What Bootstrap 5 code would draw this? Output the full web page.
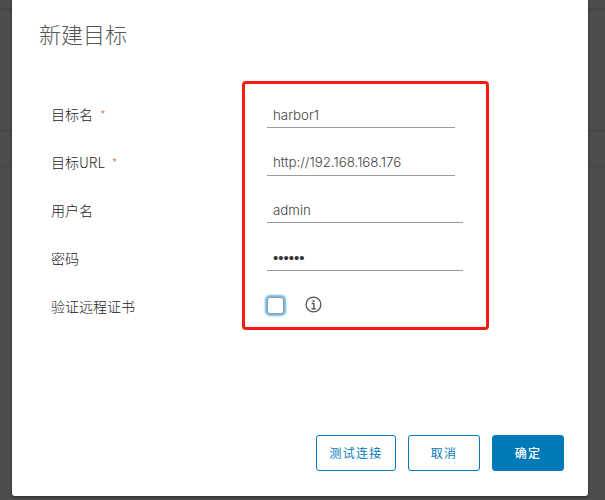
<!DOCTYPE html>
<html lang="zh"><head><meta charset="utf-8">
<link href="https://cdn.jsdelivr.net/npm/bootstrap@5.3.0/dist/css/bootstrap.min.css" rel="stylesheet">
<style>
html,body{height:500px;overflow:hidden}
body{background-color:#4d4d4d;background-image:linear-gradient(#464646,#464646),linear-gradient(#464646,#464646),linear-gradient(#464646,#464646);background-repeat:no-repeat;background-size:100% 2px,100% 2px,100% 1px;background-position:0 8px,0 130px,0 166px;font-family:"Inter","Noto Sans CJK SC",sans-serif;color:#333}
.dlg-wrap{padding:0 17px 0 12px;margin-top:-8px;height:504px}
.dlg{height:504px;background:#fff;border-radius:3px;box-shadow:0 1px 3px rgba(0,0,0,.5);padding:26px 0 0 27px;display:flex;flex-direction:column}
.dlg-title{font-size:22px;font-weight:300;color:#565656;margin:0 0 0;line-height:30px;font-family:"Noto Sans CJK SC",sans-serif}
.form-zone{display:flex;margin-top:33px}
.labels{width:203px;padding-left:12px;padding-top:9px}
.lab{height:48px;font-size:14px;line-height:48px;color:#1a1a1a;font-family:"Noto Sans CJK SC",sans-serif;font-weight:300}
.req{color:#e1705f;margin-left:7px;font-size:13px}
.fields{width:247px;height:249px;border:3px solid #fa1a0e;border-radius:4px;padding:8px 0 0 22px}
.fld{height:47.67px}
.fld input{display:block;border:0;border-bottom:1px solid #9a9a9a;border-radius:0;padding:10px 6px 0;height:36px;font-size:13.3px;font-weight:300;color:#444;font-family:"Inter",sans-serif;background:transparent;outline:0}
.fld input[type=password]{font-family:"Liberation Sans",sans-serif;font-size:15px;color:#333}
.w1{width:188px}
.w2{width:196px}
.chk-row{display:flex;align-items:center;gap:21px;height:48px;margin-top:-2px}
.chkbox{width:17px;height:17px;border:1px solid #9a9a9a;border-radius:3px;box-shadow:0 0 2px 2px #6bb8e6;background:#fff;margin-top:1px}
.acts{margin-top:auto;margin-bottom:25px;padding-right:24px;display:flex;justify-content:flex-end;gap:12px}
.bt{height:36px;font-size:12px;padding:0;border-radius:3px;font-family:"Noto Sans CJK SC",sans-serif;letter-spacing:1.2px;display:flex;align-items:center;justify-content:center}
.bt-o{background:#fff;border:1px solid #0079b8;color:#0079b8}
.bt-p{background:#0079b8;border:1px solid #0079b8;color:#fff;font-weight:500}
.bw1{width:80px}
.bw2{width:72px}
</style></head><body>
<div class="dlg-wrap"><div class="dlg">
<h3 class="dlg-title">新建目标</h3>
<div class="form-zone">
<div class="labels">
<div class="lab">目标名<span class="req">*</span></div>
<div class="lab">目标URL<span class="req">*</span></div>
<div class="lab">用户名</div>
<div class="lab">密码</div>
<div class="lab">验证远程证书</div>
</div>
<div class="fields">
<div class="fld"><input class="w1" value="harbor1"></div>
<div class="fld"><input class="w1" value="http://192.168.168.176"></div>
<div class="fld"><input class="w2" value="admin"></div>
<div class="fld"><input class="w2" type="password" value="harbor"></div>
<div class="chk-row"><span class="chkbox"></span>
<svg width="17" height="17" viewBox="0 0 17 17" fill="none" stroke="#565656"><circle cx="8.5" cy="8.5" r="7.4" stroke-width="1.3"/><circle cx="8.5" cy="5" r="1.1" fill="#565656" stroke="none"/><path d="M6.7 7.5h2.2v5M6.5 12.7h4.2" stroke-width="1.4"/></svg>
</div>
</div>
</div>
<div class="acts">
<button class="bt bt-o bw1">测试连接</button>
<button class="bt bt-o bw2">取消</button>
<button class="bt bt-p bw2">确定</button>
</div>
</div></div>
</body></html>
